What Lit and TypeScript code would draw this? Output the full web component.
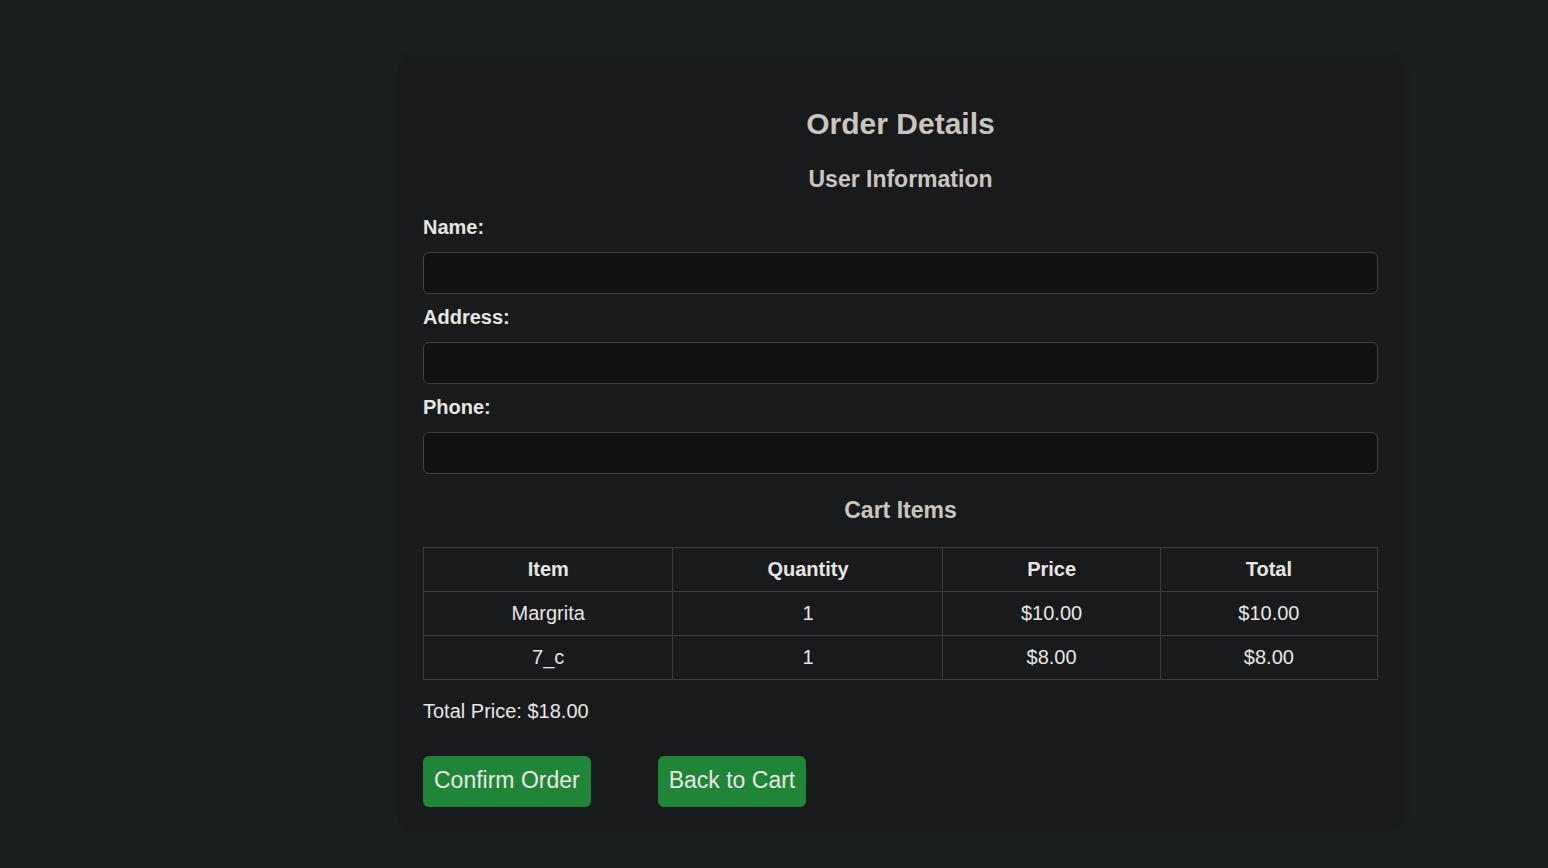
import { LitElement, html, css } from "lit";
import { customElement, state } from "lit/decorators.js";

interface CartItem {
  name: string;
  quantity: number;
  price: number;
}

const money = (value: number) => `$${value.toFixed(2)}`;

@customElement("app-root")
export class AppRoot extends LitElement {
  static styles = css`
    :host {
      display: block;
      box-sizing: border-box;
      min-height: 100vh;
      padding: 57px 145px 36px 398px;
      background: #1a1e1f;
      color: #e8e6e3;
      font: 20px/23px "Liberation Sans", Arial, sans-serif;
    }
    .card {
      padding: 25px;
      border-radius: 15px;
      background: #191a1b;
      box-shadow: 0 0 10px rgba(0, 0, 0, 0.1);
    }
    .title,
    .section {
      color: #cac5be;
      font-weight: bold;
      text-align: center;
    }
    .title {
      margin: 25px 0;
      font-size: 30px;
      line-height: 34px;
    }
    .section {
      margin: 23px 0;
      font-size: 23px;
      line-height: 27px;
    }
    .fields {
      display: grid;
      gap: 12px;
    }
    .field {
      display: grid;
      gap: 13px;
    }
    .label {
      font-weight: bold;
    }
    .input {
      box-sizing: border-box;
      width: 100%;
      height: 42px;
      padding: 8px 10px;
      border: 1px solid #3e4446;
      border-radius: 6px;
      background: #121212;
      color: inherit;
      font: inherit;
    }
    .items {
      width: 100%;
      border-collapse: collapse;
      text-align: center;
    }
    .cell {
      padding: 10px;
      border: 1px solid #3c3e40;
    }
    .total {
      margin: 20px 0 33px;
    }
    .actions {
      display: flex;
      flex-wrap: wrap;
      gap: 16px 67px;
    }
    .button {
      padding: 11px 11px 14px;
      border: 0;
      border-radius: 6px;
      background: #208637;
      color: #e8e6e3;
      font: 23px/26px "Liberation Sans", Arial, sans-serif;
      text-decoration: none;
      cursor: pointer;
    }
    @media (max-width: 1100px) {
      :host {
        padding: 24px;
      }
    }
  `;

  @state() private items: CartItem[] = [
    { name: "Margrita", quantity: 1, price: 10 },
    { name: "7_c", quantity: 1, price: 8 },
  ];

  private field(id: string, label: string, type = "text") {
    return html`<div class="field">
      <label class="label" for=${id}>${label}</label>
      <input class="input" id=${id} name=${id} type=${type} />
    </div>`;
  }

  render() {
    const total = this.items.reduce((sum, i) => sum + i.quantity * i.price, 0);
    return html`<main class="card">
      <h2 class="title">Order Details</h2>
      <form @submit=${(e: Event) => e.preventDefault()}>
        <h3 class="section">User Information</h3>
        <div class="fields">
          ${this.field("name", "Name:")} ${this.field("address", "Address:")}
          ${this.field("phone", "Phone:", "tel")}
        </div>
        <h3 class="section">Cart Items</h3>
        <table class="items">
          <thead>
            <tr>
              ${["Item", "Quantity", "Price", "Total"].map(
                (h) => html`<th class="cell" scope="col">${h}</th>`
              )}
            </tr>
          </thead>
          <tbody>
            ${this.items.map(
              (i) => html`<tr>
                <td class="cell">${i.name}</td>
                <td class="cell">${i.quantity}</td>
                <td class="cell">${money(i.price)}</td>
                <td class="cell">${money(i.quantity * i.price)}</td>
              </tr>`
            )}
          </tbody>
        </table>
        <p class="total">Total Price: ${money(total)}</p>
        <div class="actions">
          <button class="button" type="submit">Confirm Order</button>
          <a class="button" href="#cart">Back to Cart</a>
        </div>
      </form>
    </main>`;
  }
}
